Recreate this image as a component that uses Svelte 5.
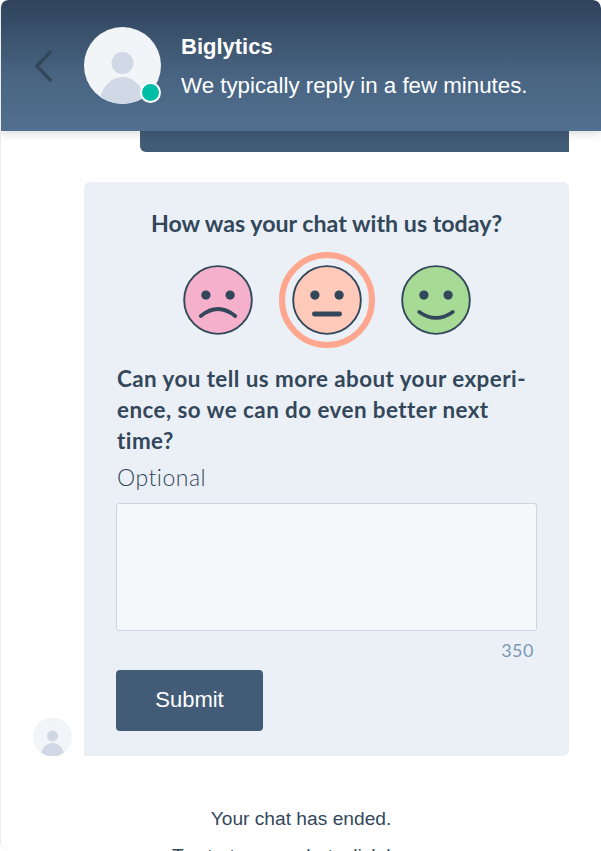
<script>
  let feedback = $state('');
  let rating = $state('neutral');

  const maxLength = 350;
  let remaining = $derived(maxLength - feedback.length);

  const faces = [
    { id: 'sad', label: 'Unhappy', fill: '#f5b0cb', mouth: 'M12.2 35 Q24 25.4 35.8 35' },
    { id: 'neutral', label: 'Neutral', fill: '#ffcab9', mouth: 'M15.4 33.6 H32.6' },
    { id: 'happy', label: 'Happy', fill: '#a6da95', mouth: 'M12.5 32.2 Q24 40.4 35.5 32.2' }
  ];
</script>

<div class="widget">
  <header class="header">
    <button class="back" aria-label="Back">
      <svg width="20" height="34" viewBox="0 0 20 34">
        <path d="M17.3 3 L3.8 17 L17.3 31" fill="none" stroke="#33475b" stroke-width="3.4" stroke-linecap="round" stroke-linejoin="round" />
      </svg>
    </button>
    <div class="avatar">
      <svg viewBox="0 0 77 77" width="77" height="77">
        <defs>
          <clipPath id="head-clip"><circle cx="38.5" cy="38.5" r="38.5" /></clipPath>
        </defs>
        <circle cx="38.5" cy="38.5" r="38.5" fill="#f2f5f8" />
        <g clip-path="url(#head-clip)">
          <circle cx="38.5" cy="36" r="11" fill="#cfd8e4" />
          <ellipse cx="38.5" cy="77" rx="23" ry="27" fill="#cfd8e4" />
        </g>
      </svg>
      <span class="status"></span>
    </div>
    <div class="info">
      <div class="name">Biglytics</div>
      <div class="tagline">We typically reply in a few minutes.</div>
    </div>
  </header>

  <div class="bubble"></div>

  <div class="thread">
    <div class="small-avatar">
      <svg viewBox="0 0 39 38" width="39" height="38">
        <defs>
          <clipPath id="small-clip"><circle cx="19.5" cy="19" r="19.5" /></clipPath>
        </defs>
        <circle cx="19.5" cy="19" r="19.5" fill="#f2f5f8" />
        <g clip-path="url(#small-clip)">
          <circle cx="19.5" cy="18" r="5.5" fill="#cfd8e4" />
          <ellipse cx="19.5" cy="38" rx="11.5" ry="13" fill="#cfd8e4" />
        </g>
      </svg>
    </div>

    <form class="card" onsubmit={(e) => e.preventDefault()}>
      <h2>How was your chat with us today?</h2>

      <div class="faces">
        {#each faces as face}
          <button
            type="button"
            class="face"
            class:selected={rating === face.id}
            aria-label={face.label}
            onclick={() => (rating = face.id)}
          >
            <svg viewBox="0 0 48 48" width="70" height="70">
              <circle cx="24" cy="24" r="23.2" fill={face.fill} stroke="#33475b" stroke-width="1.3" />
              <circle cx="15.7" cy="20.6" r="3.2" fill="#33475b" />
              <circle cx="32.3" cy="20.6" r="3.2" fill="#33475b" />
              <path d={face.mouth} fill="none" stroke="#33475b" stroke-width={face.id === 'neutral' ? 3.4 : 2.6} stroke-linecap="round" />
            </svg>
          </button>
        {/each}
      </div>

      <label class="question" for="feedback">Can you tell us more about your experi&shy;ence, so we can do even better next time?</label>
      <div class="optional">Optional</div>
      <textarea id="feedback" maxlength={maxLength} bind:value={feedback}></textarea>
      <div class="counter">{remaining}</div>
      <button type="submit" class="submit">Submit</button>
    </form>
  </div>

  <div class="ended">
    <p>Your chat has ended.</p>
    <p>To start a new chat, click here.</p>
  </div>
</div>

<style>
  :global(body) {
    background: #ffffff;
  }

  .widget {
    box-sizing: border-box;
    height: 851px;
    overflow: hidden;
    background: #ffffff;
    border-left: 1px solid #ededed;
    border-radius: 8px;
    font-family: "Liberation Sans", Arial, sans-serif;
    color: #33475b;
  }

  .header {
    position: relative;
    z-index: 2;
    display: flex;
    align-items: flex-start;
    box-sizing: border-box;
    height: 131px;
    margin-left: -1px;
    padding: 27px 0 0 33px;
    border-radius: 8px 8px 0 0;
    background: linear-gradient(to bottom, #2f435b 0%, #496583 60%, #516f90 100%);
    box-shadow: 0 3px 10px rgba(0, 0, 0, 0.14);
  }

  .back {
    display: flex;
    padding: 0;
    margin: 22px 0 0 0;
    border: 0;
    background: none;
  }

  .avatar {
    position: relative;
    width: 77px;
    height: 77px;
    margin-left: 31px;
  }

  .avatar svg {
    display: block;
  }

  .status {
    position: absolute;
    right: 0;
    bottom: 1px;
    box-sizing: border-box;
    width: 21px;
    height: 21px;
    border: 2px solid #ffffff;
    border-radius: 50%;
    background: #00bda5;
  }

  .info {
    margin-left: 20px;
    padding-top: 6px;
    color: #ffffff;
  }

  .name {
    font-size: 22px;
    font-weight: 700;
    line-height: 28px;
  }

  .tagline {
    margin-top: 11px;
    font-size: 22.3px;
    line-height: 28px;
  }

  .bubble {
    width: 429px;
    height: 21px;
    margin-left: 139px;
    border-radius: 0 0 0 6px;
    background: #425b76;
  }

  .thread {
    display: flex;
    align-items: flex-end;
    margin-top: 30px;
    padding-left: 32px;
  }

  .small-avatar {
    flex: none;
    width: 39px;
    height: 38px;
    margin-right: 12px;
  }

  .small-avatar svg {
    display: block;
  }

  .card {
    display: flex;
    flex-direction: column;
    box-sizing: border-box;
    width: 485px;
    height: 574px;
    padding: 28px 32px 0;
    border-radius: 6px 6px 6px 0;
    background: #eaf0f6;
    font-family: Lato, "Open Sans", sans-serif;
  }

  h2 {
    margin: 0;
    font-size: 23.2px;
    font-weight: 700;
    line-height: 26px;
    text-align: center;
  }

  .faces {
    display: flex;
    justify-content: center;
    align-items: center;
    gap: 39px;
    height: 70px;
    margin-top: 29px;
  }

  .face {
    position: relative;
    display: block;
    width: 70px;
    height: 70px;
    padding: 0;
    border: 0;
    border-radius: 50%;
    background: none;
  }

  .face svg {
    display: block;
  }

  .face.selected::after {
    content: "";
    position: absolute;
    inset: -13px;
    border: 6px solid #ffa78e;
    border-radius: 50%;
  }

  .question {
    margin: 28px 0 0 1px;
    font-size: 22.4px;
    font-weight: 700;
    line-height: 31px;
    letter-spacing: 0.45px;
  }

  .optional {
    margin: 6px 0 0 1px;
    font-size: 23px;
    font-weight: 300;
    line-height: 30px;
    letter-spacing: 0.5px;
  }

  textarea {
    display: block;
    box-sizing: border-box;
    width: 421px;
    height: 128px;
    margin-top: 11px;
    padding: 8px 12px;
    border: 1px solid #cbd6e2;
    border-radius: 3px;
    background: #f5f8fa;
    font: inherit;
    resize: none;
    outline: none;
  }

  .counter {
    margin-top: 8px;
    padding-right: 3px;
    font-size: 18px;
    line-height: 22px;
    letter-spacing: 0.5px;
    text-align: right;
    color: #7c98b6;
  }

  .submit {
    width: 147px;
    height: 61px;
    margin-top: 9px;
    padding: 0 0 2px;
    border: 0;
    border-radius: 4px;
    background: #425b76;
    color: #ffffff;
    font-family: "Liberation Sans", Arial, sans-serif;
    font-size: 22px;
  }

  .ended {
    margin-top: 50px;
    text-align: center;
    font-size: 19.2px;
    line-height: 26px;
    color: #33475b;
  }

  .ended p {
    margin: 0 0 11px;
  }
</style>
